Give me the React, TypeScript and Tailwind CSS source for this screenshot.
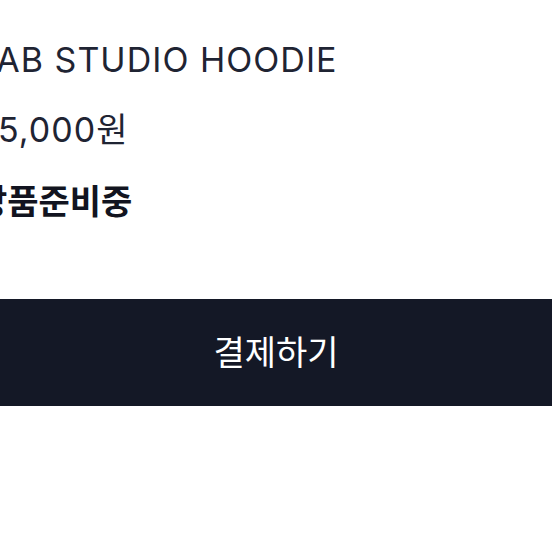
export default function App() {
  return (
    <main className="min-h-screen overflow-hidden bg-white" style={{ fontFamily: "Inter, 'Noto Sans CJK KR', sans-serif" }}>
      {/* Product info */}
      <div className="-ml-[24px] flex flex-col pt-[38px]">
        <h1 className="text-[34px] leading-[44px] tracking-[0.03em] text-[#1f2433]">LAB STUDIO HOODIE</h1>
        <p className="mt-[26px] text-[34px] leading-[44px] tracking-[0.03em] text-[#1f2433]">35,000원</p>
        <p className="mt-[28px] text-[34px] font-bold leading-[44px] text-[#121420]">상품준비중</p>
      </div>

      {/* Checkout */}
      <button className="mt-[75px] flex h-[107px] w-full items-center justify-center bg-[#141826] text-[34px] text-white">
        결제하기
      </button>
    </main>
  );
}
